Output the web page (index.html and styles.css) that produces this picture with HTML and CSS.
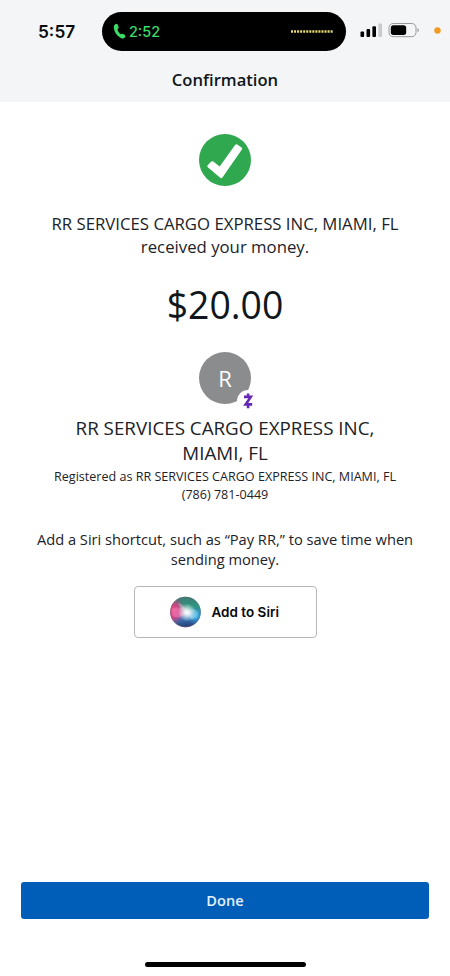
FILE: index.html
```html
<!DOCTYPE html>
<html lang="en">
<head>
<meta charset="utf-8">
<title>Confirmation</title>
<link rel="stylesheet" href="styles.css">
</head>
<body>
<div class="screen">
  <header class="header">
    <div class="status">
      <span class="clock">5:57</span>
      <div class="island">
        <svg class="phone" width="13" height="17" viewBox="0 0 13 17"><path d="M2.2 1.2 Q3.7 .3 4.7 1.6 L5.6 3.9 Q5.9 4.9 5 5.6 Q4.3 6.2 4.6 7 Q5.3 9.2 7 10.8 Q7.7 11.4 8.5 11 Q9.6 10.4 10.4 11 L12 12.2 Q13 13.2 12 14.3 Q10.5 16.2 8.2 15.2 Q1.8 12 .8 5 Q.4 2.5 2.2 1.2Z" fill="#3ddc67"/></svg>
        <span class="call-time">2:52</span>
        <svg class="wave" width="42" height="3" viewBox="0 0 42 3"><path d="M0 1.5H42" stroke="#e9dc72" stroke-width="2.4" stroke-dasharray="2 1.05"/></svg>
      </div>
      <svg class="indicators" width="82" height="16" viewBox="0 0 82 16">
        <g fill="#000"><rect x=".5" y="9.5" width="3.6" height="5.5" rx="1"/><rect x="6.5" y="7" width="3.6" height="8" rx="1"/><rect x="12.4" y="4.3" width="3.6" height="10.7" rx="1"/></g>
        <rect x="18.4" y="1.5" width="3.6" height="13.5" rx="1" fill="#c9cacc"/>
        <rect x="29" y="1.5" width="27" height="13.2" rx="4.2" fill="none" stroke="#98999b"/>
        <rect x="30.8" y="3.3" width="15.4" height="9.6" rx="2.6" fill="#000"/>
        <path d="M57.5 6 Q59 6.8 59 8.1 Q59 9.4 57.5 10.2Z" fill="#98999b"/>
        <circle cx="77.5" cy="8.5" r="3.2" fill="#f39a21"/>
      </svg>
    </div>
    <h1 class="title">Confirmation</h1>
  </header>
  <main class="content">
    <svg class="check" width="52" height="52" viewBox="0 0 52 52"><circle cx="26" cy="26" r="26" fill="#2fa84f"/><path d="M8.6 31.2 L12.3 27.6 Q13.3 26.8 14.3 27.6 L20.7 32.6 L36.2 10.8 Q37 9.8 38.2 10.6 L42.6 13.6 Q43.6 14.4 42.9 15.5 L23.4 43.5 Q22.4 44.8 21.2 43.8 L8.8 33.2 Q7.8 32.2 8.6 31.2Z" fill="#fff"/></svg>
    <p class="message">RR SERVICES CARGO EXPRESS INC, MIAMI, FL<br>received your money.</p>
    <p class="amount">$20.00</p>
    <div class="avatar">
      <span>R</span>
      <svg class="badge" width="22" height="22" viewBox="0 0 22 22"><circle cx="11" cy="11" r="11" fill="#fff"/><path d="M7 6.9H13.8L8.6 14.4H15.2M11.1 3.4V7M11.1 14.6V18.3" fill="none" stroke="#6528b4" stroke-width="2.6"/></svg>
    </div>
    <h2 class="recipient">RR SERVICES CARGO EXPRESS INC,<br>MIAMI, FL</h2>
    <p class="details">Registered as RR SERVICES CARGO EXPRESS INC, MIAMI, FL<br>(786) 781-0449</p>
    <p class="hint">Add a Siri shortcut, such as “Pay RR,” to save time when<br>sending money.</p>
    <button class="siri">
      <svg width="32" height="32" viewBox="0 0 32 32">
        <defs>
          <radialGradient id="glow"><stop offset="0" stop-color="#fff"/><stop offset=".25" stop-color="#fff" stop-opacity=".85"/><stop offset="1" stop-color="#fff" stop-opacity="0"/></radialGradient>
          <radialGradient id="pink"><stop offset="0" stop-color="#ee5590"/><stop offset=".5" stop-color="#dc3e83" stop-opacity=".9"/><stop offset="1" stop-color="#c9397b" stop-opacity="0"/></radialGradient>
          <radialGradient id="cyan"><stop offset="0" stop-color="#43bde9"/><stop offset="1" stop-color="#2686cd" stop-opacity="0"/></radialGradient>
          <linearGradient id="base" x1=".45" y1="0" x2=".55" y2="1"><stop offset="0" stop-color="#3b7970"/><stop offset=".4" stop-color="#2f9a84"/><stop offset=".65" stop-color="#397fbc"/><stop offset="1" stop-color="#26366f"/></linearGradient>
          <clipPath id="orb"><circle cx="15.5" cy="16" r="15.3"/></clipPath>
        </defs>
        <g clip-path="url(#orb)">
          <rect width="32" height="32" fill="url(#base)"/>
          <circle cx="2" cy="15" r="14" fill="url(#pink)"/>
          <circle cx="26" cy="20" r="10" fill="url(#cyan)"/>
          <path d="M2 13Q10 8 17 17Q9 24 3 20Z" fill="#f486bc" opacity=".5"/>
          <path d="M16 17Q24 10 28 16Q28 22 22 24Z" fill="#9be5f4" opacity=".4"/>
          <path d="M8 7Q15 9 17 16L11 13Z" fill="#fff" opacity=".3"/>
          <circle cx="17" cy="16.5" r="9" fill="url(#glow)"/>
        </g>
        <circle cx="15.5" cy="16" r="14.9" fill="none" stroke="#7d647d" stroke-opacity=".55" stroke-width=".8"/>
      </svg>
      <span>Add to Siri</span>
    </button>
  </main>
  <footer class="footer">
    <button class="done">Done</button>
    <div class="home-indicator"></div>
  </footer>
</div>
</body>
</html>
```

FILE: styles.css
```css
* { box-sizing: border-box; }
body { margin: 0; background: #fff; font-family: "Open Sans", sans-serif; color: #1c2228; }
h1, h2, p { margin: 0; font-weight: 400; white-space: nowrap; }
button { font: inherit; padding: 0; }
svg { display: block; flex: none; }
.screen { width: 450px; height: 976px; display: flex; flex-direction: column; overflow: hidden; }
.header { height: 102px; flex: none; background: #f4f5f7; padding-top: 12px; }
.status { display: flex; height: 39px; align-items: center; }
.clock { width: 102px; padding-left: 38px; font: 600 17.3px/38px Inter, sans-serif; color: #080a0c; }
.island { width: 244px; height: 39px; border-radius: 20px; background: #000; display: flex; align-items: center; padding: 0 13px 0 11px; }
.call-time { margin-left: 3px; font: 500 14.4px/38px Inter, sans-serif; color: #3ddc67; }
.wave { margin: 0 0 1px auto; }
.indicators { margin: 0 0 3px 14px; }
.title { font-size: 16.6px; line-height: 24px; font-weight: 600; text-align: center; padding-top: 17px; color: #10171c; }
.content { flex: 1; display: flex; flex-direction: column; align-items: center; text-align: center; padding-top: 32px; }
.message { margin-top: 27px; font-size: 16.75px; line-height: 22.5px; }
.amount { margin-top: 21px; font-size: 37.4px; line-height: 52px; color: #10171c; }
.avatar { position: relative; margin-top: 21px; width: 52px; height: 52px; border-radius: 50%; background: #8b8c8e; color: #fff; font-size: 22px; line-height: 52px; }
.badge { position: absolute; left: 38px; top: 38px; }
.recipient { margin-top: 12px; font-size: 18.8px; line-height: 25px; }
.details { margin-top: 2px; font-size: 12.57px; line-height: 18px; }
.hint { margin-top: 25px; font-size: 14.66px; line-height: 20px; }
.siri { margin-top: 17px; width: 183px; height: 52px; border: 1px solid #b5b6b7; border-radius: 4px; background: #fff; display: flex; align-items: center; padding-left: 35px; font: 600 13.5px Inter, sans-serif; color: #08090a; }
.siri span { margin-left: 10px; }
.footer { height: 94px; flex: none; padding: 0 21px; }
.done { display: block; width: 408px; height: 37px; border: 0; border-radius: 3px; background: #005eb8; color: #e5f2ff; font-size: 14.6px; font-weight: 600; line-height: 37px; }
.home-indicator { width: 161px; height: 5px; margin: 43px auto 0; border-radius: 3px; background: #000; }
```
